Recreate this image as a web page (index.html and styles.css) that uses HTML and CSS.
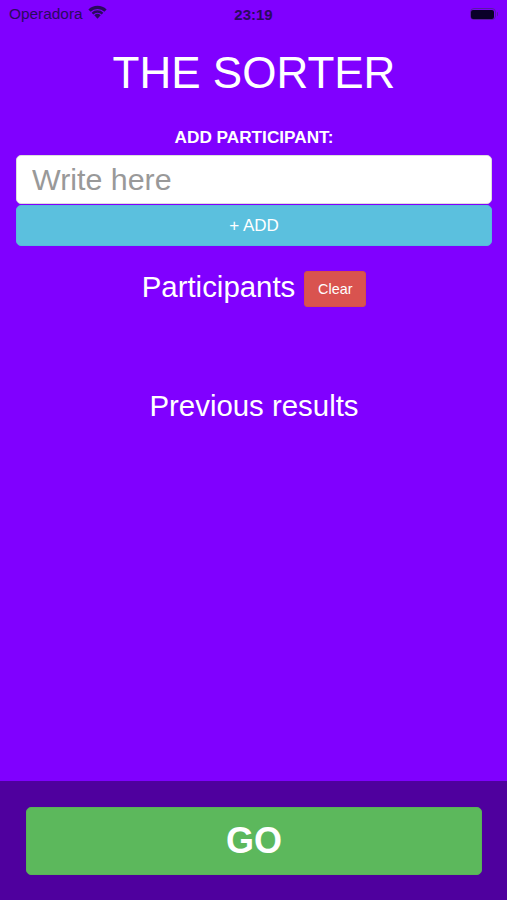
FILE: index.html
```html
<!DOCTYPE html>
<html lang="pt">
<head>
<meta charset="utf-8">
<title>The Sorter</title>
<link rel="stylesheet" href="styles.css">
</head>
<body>
<div class="app">
  <div class="status">
    <div class="status-left">
      <span class="carrier">Operadora</span>
      <svg class="wifi" viewBox="0 0 20 15" width="19" height="14" aria-hidden="true">
        <path d="M10 14.8 L6.6 11 A5 5 0 0 1 13.4 11 Z" fill="#2a0a5e"/>
        <path d="M1.4 6 A12.4 12.4 0 0 1 18.6 6" fill="none" stroke="#2a0a5e" stroke-width="3.4"/>
        <path d="M4.6 9.2 A7.8 7.8 0 0 1 15.4 9.2" fill="none" stroke="#2a0a5e" stroke-width="2.6"/>
      </svg>
    </div>
    <span class="time">23:19</span>
    <div class="status-right">
      <span class="battery"><span class="battery-fill"></span></span>
      <span class="battery-nub"></span>
    </div>
  </div>
  <main class="content">
    <h1 class="title">THE SORTER</h1>
    <div class="label">ADD PARTICIPANT:</div>
    <input class="field" type="text" placeholder="Write here">
    <button class="add" type="button">+ ADD</button>
    <div class="participants">
      <span class="heading participants-title">Participants</span>
      <button class="clear" type="button">Clear</button>
    </div>
    <div class="heading previous">Previous results</div>
  </main>
  <footer class="footer">
    <button class="go" type="button">GO</button>
  </footer>
</div>
</body>
</html>
```
FILE: styles.css
```css
* { box-sizing: border-box; }
html, body { margin: 0; padding: 0; }
body { font-family: "Liberation Sans", Arial, sans-serif; background: #8000ff; color: #fff; }
.app { width: 507px; height: 900px; display: flex; flex-direction: column; background: #8000ff; overflow: hidden; }
.status { height: 28px; flex: none; display: grid; grid-template-columns: 1fr auto 1fr; align-items: center; padding: 0 9px 0 9px; color: #2e0a63; }
.status-left { display: flex; align-items: center; gap: 5px; }
.carrier { font-size: 15.4px; color: #2a0a5e; }
.wifi { margin-top: -4px; }
.time { font-size: 15px; font-weight: bold; color: #2a0a5e; }
.status-right { display: flex; justify-content: flex-end; align-items: center; gap: 1px; }
.battery { width: 26px; height: 12px; border: 1px solid #5a1aa5; border-radius: 4px; padding: 0.5px; display: block; }
.battery-fill { display: block; height: 100%; background: #0a0028; border-radius: 2px; }
.battery-nub { width: 1.5px; height: 4px; background: #5a1aa5; border-radius: 0 1px 1px 0; }
.content { flex: 1; padding: 0 15px 0 16px; display: flex; flex-direction: column; align-items: stretch; }
.title { margin: 19px 0 0; font-size: 44px; line-height: 52px; font-weight: normal; text-align: center; }
.label { margin-top: 28px; font-size: 17.2px; line-height: 20px; font-weight: bold; text-align: center; }
.field { margin-top: 8px; height: 49px; width: 100%; border: 1px solid #ddd; border-radius: 5px; background: #fff; padding: 0 15px; font: 30.4px "Liberation Sans", Arial, sans-serif; }
.field::placeholder { color: #999; opacity: 1; }
.add { height: 41px; margin-top: 1px; border: 1px solid #56b9dc; border-radius: 5px; background: #5bc0de; color: #fff; font: 17px "Liberation Sans", Arial, sans-serif; }
.participants { margin-top: 25px; display: flex; justify-content: center; align-items: center; gap: 9px; height: 36px; }
.heading { font-size: 29.4px; line-height: 36px; text-align: center; }
.participants-title { margin-top: -4px; }
.clear { width: 62px; height: 36px; border: 1px solid #d64d4a; border-radius: 3px; background: #d9534f; color: #fff; font: 14.4px "Liberation Sans", Arial, sans-serif; padding: 0; }
.previous { margin-top: 81px; }
.footer { flex: none; height: 119px; background: #4f009e; padding: 26px 25px 0 26px; }
.go { display: block; width: 100%; height: 68px; border: 1px solid #58b258; border-radius: 5px; background: #5cb85c; color: #fff; font: bold 36px "Liberation Sans", Arial, sans-serif; }
```
